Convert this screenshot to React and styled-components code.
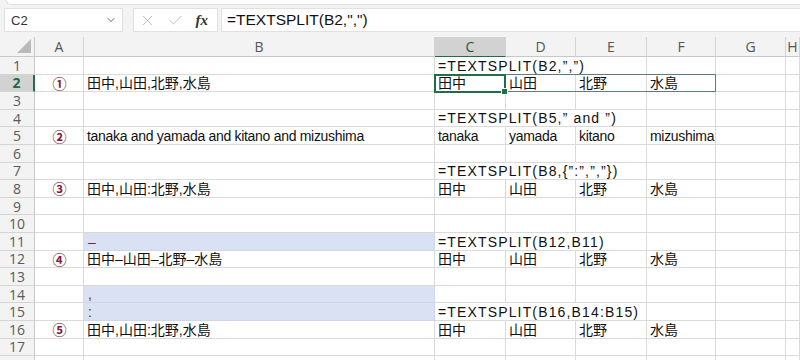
import React from "react";
import styled, { createGlobalStyle } from "styled-components";
import { ChevronDown, X, Check } from "lucide-react";

const GlobalStyle = createGlobalStyle`
  html, body {
    margin: 0;
    padding: 0;
    background: #f3f3f3;
  }
  body {
    font-family: "Liberation Sans", "Noto Sans CJK JP", sans-serif;
  }
`;

const COLUMNS = ["A", "B", "C", "D", "E", "F", "G", "H"];
// 17 rows are in view; an 18th starts at the bottom edge, cut before its number shows
const VISIBLE_ROWS = 17;
const ROW_COUNT = 18;
const LINE = "#dadada";
const GREEN = "#1f6e45";

const echo = (r, text) => ({ r, c: 3, span: 3, text, kind: "echo" });
const mark = (r, text) => ({ r, c: 1, text, kind: "mark" });
const split = (r, values, kind) =>
  values.map((text, i) => ({ r, c: 3 + i, text, kind }));
const names = ["田中", "山田", "北野", "水島"];

const CELLS = [
  echo(1, "=TEXTSPLIT(B2,”,”)"),
  mark(2, "①"),
  { r: 2, c: 2, text: "田中,山田,北野,水島" },
  ...split(2, names),
  echo(4, "=TEXTSPLIT(B5,” and ”)"),
  mark(5, "②"),
  { r: 5, c: 2, text: "tanaka and yamada and kitano and mizushima", kind: "latin" },
  ...split(5, ["tanaka", "yamada", "kitano", "mizushima"], "latin"),
  echo(7, "=TEXTSPLIT(B8,{”:”,”,”})"),
  mark(8, "③"),
  { r: 8, c: 2, text: "田中,山田:北野,水島" },
  ...split(8, names),
  { r: 11, c: 2, text: "–", kind: "delim", fill: true },
  echo(11, "=TEXTSPLIT(B12,B11)"),
  mark(12, "④"),
  { r: 12, c: 2, text: "田中–山田–北野–水島" },
  ...split(12, names),
  { r: 14, c: 2, text: ",", kind: "delim", fill: true },
  { r: 15, c: 2, text: ":", kind: "delim", fill: true },
  echo(15, "=TEXTSPLIT(B16,B14:B15)"),
  mark(16, "⑤"),
  { r: 16, c: 2, text: "田中,山田:北野,水島" },
  ...split(16, names),
];

export default function App() {
  const rows = [];
  for (let r = 1; r <= ROW_COUNT; r++) {
    rows.push(
      <RowHead key={`h${r}`} $row={r + 1} $active={r === 2}>
        {r <= VISIBLE_ROWS ? r : null}
      </RowHead>
    );
    let c = 1;
    while (c <= COLUMNS.length) {
      const cell = CELLS.find((x) => x.r === r && x.c === c);
      const span = cell?.span || 1;
      rows.push(
        <Cell
          key={`${r}-${c}`}
          $row={r + 1}
          $col={c + 1}
          $span={span}
          $kind={cell?.kind}
          $fill={cell?.fill}
        >
          {cell?.text}
        </Cell>
      );
      c += span;
    }
  }

  return (
    <Page>
      <GlobalStyle />
      <RibbonEdge />
      <FormulaBar>
        <NameBox>
          <span>C2</span>
          <ChevronDown size={12} strokeWidth={1.6} color="#444" />
        </NameBox>
        <FxBox>
          <X size={17} strokeWidth={1.1} color="#a9a9a9" />
          <Check size={17} strokeWidth={1.1} color="#a9a9a9" />
          <FxLabel>fx</FxLabel>
        </FxBox>
        <FormulaInput>=TEXTSPLIT(B2,",")</FormulaInput>
      </FormulaBar>
      <Sheet>
        <Corner>
          <svg width="14" height="14" viewBox="0 0 14 14">
            <polygon points="14,0 14,14 0,14" fill="#b9b9b9" />
          </svg>
        </Corner>
        {COLUMNS.map((letter, i) => (
          <ColHead key={letter} $col={i + 2} $active={letter === "C"}>
            {letter}
          </ColHead>
        ))}
        {rows}
        <SpillOutline />
        <Selection />
      </Sheet>
    </Page>
  );
}

const Page = styled.div`
  width: 800px;
  height: 360px;
  overflow: hidden;
  background: #f3f3f3;
`;

const RibbonEdge = styled.div`
  height: 5px;
  margin-left: 6px;
  background: #ffffff;
  border-bottom: 1px solid #dedede;
  border-left: 1px solid #dedede;
  border-bottom-left-radius: 8px;
  box-sizing: border-box;
`;

const FormulaBar = styled.div`
  display: flex;
  height: 24px;
  margin: 3px 0 5px;
  padding-left: 4px;
`;

const NameBox = styled.div`
  width: 119px;
  box-sizing: border-box;
  display: flex;
  align-items: center;
  justify-content: space-between;
  padding: 0 5px 0 6px;
  background: #ffffff;
  border: 1px solid #e0e0e0;
  font-size: 13px;
  color: #333;
`;

const FxBox = styled.div`
  width: 85px;
  margin-left: 10px;
  box-sizing: border-box;
  display: flex;
  align-items: center;
  justify-content: space-between;
  padding: 0 9px 0 5px;
  background: #ffffff;
  border: 1px solid #e0e0e0;
`;

const FxLabel = styled.span`
  font-family: "Liberation Serif", serif;
  font-style: italic;
  font-weight: bold;
  font-size: 15px;
  color: #333;
`;

const FormulaInput = styled.div`
  flex: 1;
  margin-left: 3px;
  display: flex;
  align-items: center;
  padding-left: 5px;
  background: #ffffff;
  border: 1px solid #e0e0e0;
  border-right: none;
  font-size: 15.5px;
  color: #111;
`;

const Sheet = styled.div`
  display: grid;
  grid-template-columns: 35px 49px 351px 71px 70px 71px 69px 70px 1fr;
  grid-template-rows: 20px repeat(${ROW_COUNT}, 17.6px);
  background: #ffffff;
`;

const Corner = styled.div`
  grid-row: 1;
  grid-column: 1;
  display: flex;
  align-items: flex-end;
  justify-content: flex-end;
  padding: 0 3px 3px 0;
  background: #f3f3f3;
  border-right: 1px solid #c8c8c8;
  border-bottom: 1px solid #c8c8c8;
`;

const ColHead = styled.div`
  grid-row: 1;
  grid-column: ${(p) => p.$col};
  display: flex;
  align-items: center;
  justify-content: center;
  background: ${(p) => (p.$active ? "#d2d2d2" : "#f3f3f3")};
  color: ${(p) => (p.$active ? "#1d5a38" : "#555")};
  border-right: 1px solid #d4d4d4;
  border-bottom: 1px solid ${(p) => (p.$active ? GREEN : "#c8c8c8")};
  font-family: "Open Sans", sans-serif;
  font-size: 14px;
`;

const RowHead = styled.div`
  grid-row: ${(p) => p.$row};
  grid-column: 1;
  display: flex;
  align-items: center;
  justify-content: center;
  box-sizing: border-box;
  background: ${(p) => (p.$active ? "#d2d2d2" : "#f3f3f3")};
  color: ${(p) => (p.$active ? "#1d6b40" : "#5a5a5a")};
  font-weight: ${(p) => (p.$active ? 700 : 400)};
  border-right: ${(p) => (p.$active ? `2px solid ${GREEN}` : "1px solid #c8c8c8")};
  border-bottom: 1px solid #d4d4d4;
  font-family: "Open Sans", sans-serif;
  font-size: 14px;
`;

const kindStyles = {
  echo: "letter-spacing: 1.15px;",
  latin: "letter-spacing: -0.3px;",
  mark: `
    justify-content: center;
    align-items: center;
    overflow: visible;
    color: #7e1a3a;
    font-family: "Noto Sans CJK JP", sans-serif;
    font-weight: 700;
    font-size: 14px;
    line-height: 14px;
  `,
  delim: "color: #7a2838; padding-left: 4px;",
};

const Cell = styled.div`
  grid-row: ${(p) => p.$row};
  grid-column: ${(p) => p.$col} / span ${(p) => p.$span};
  display: flex;
  align-items: flex-end;
  box-sizing: border-box;
  min-width: 0;
  padding: 0 2px 0 3px;
  border-right: 1px solid ${(p) => (p.$fill ? "#cdd6ea" : LINE)};
  border-bottom: 1px solid ${(p) => (p.$fill ? "#cdd6ea" : LINE)};
  background: ${(p) => (p.$fill ? "#d9e1f2" : "transparent")};
  white-space: nowrap;
  overflow: hidden;
  font-size: 14px;
  line-height: 16px;
  color: #111;
  ${(p) => kindStyles[p.$kind] || ""}
`;

const SpillOutline = styled.div`
  grid-row: 3;
  grid-column: 4 / span 4;
  margin: -1px 0 0 -1px;
  border: 1px solid #5f7b80;
  pointer-events: none;
  z-index: 2;
`;

const Selection = styled.div`
  grid-row: 3;
  grid-column: 4;
  position: relative;
  margin: -1px 0 -1px -1px;
  border: 2px solid ${GREEN};
  pointer-events: none;
  z-index: 3;

  &::after {
    content: "";
    position: absolute;
    right: -4px;
    bottom: -4px;
    width: 5px;
    height: 5px;
    background: ${GREEN};
    border: 1px solid #ffffff;
  }
`;
